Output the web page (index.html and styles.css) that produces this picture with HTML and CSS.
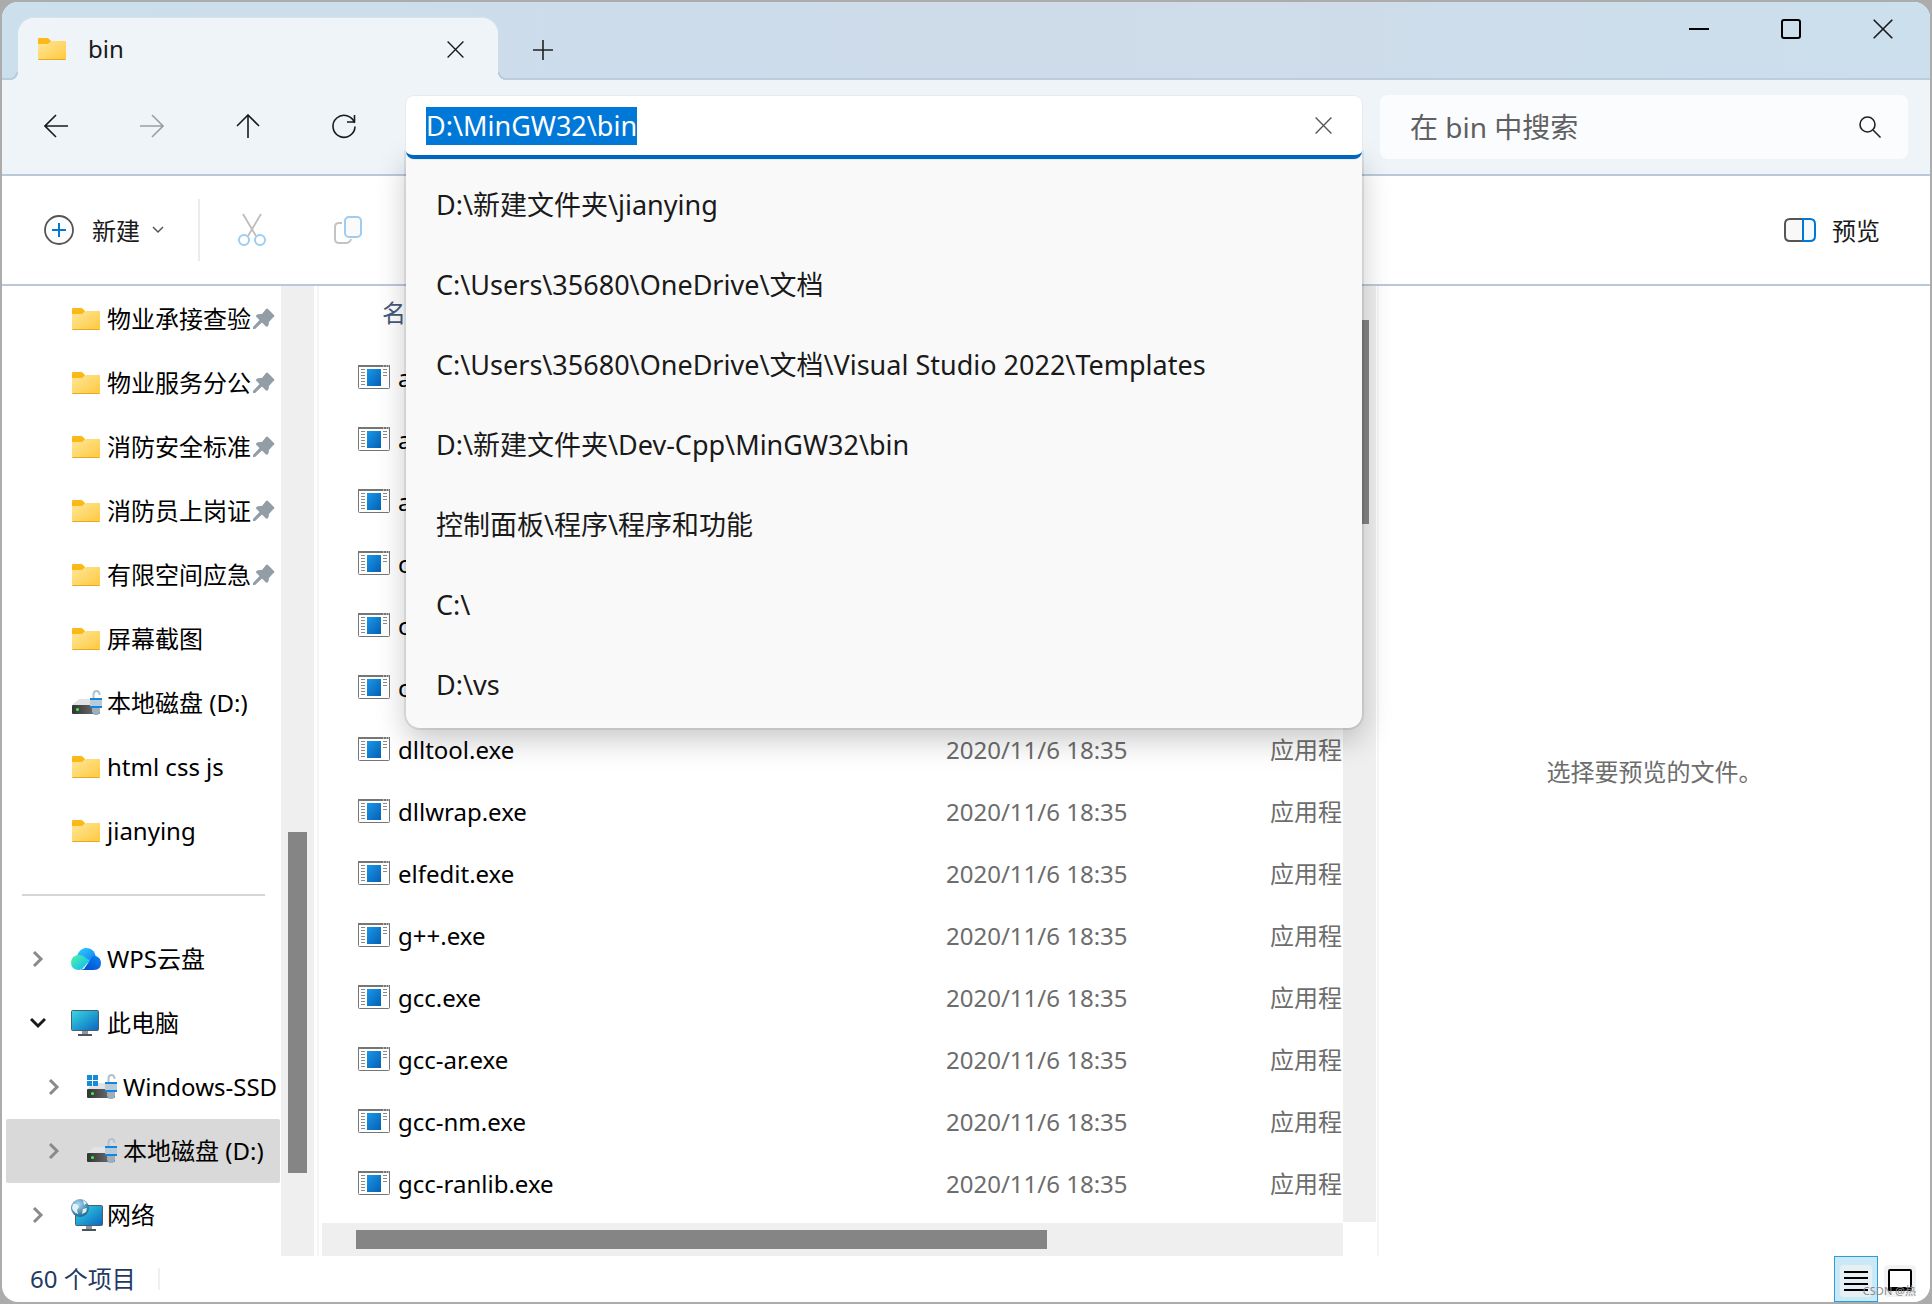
FILE: index.html
```html
<!DOCTYPE html>
<html lang="zh-CN">
<head>
<meta charset="utf-8">
<title>bin</title>
<link rel="stylesheet" href="styles.css">
</head>
<body>
<svg class="defs" width="0" height="0" aria-hidden="true">
  <defs>
    <linearGradient id="g-folder" x1="0" y1="0" x2="1" y2="1"><stop offset="0" stop-color="#ffe69c"/><stop offset="1" stop-color="#ffc93c"/></linearGradient>
    <linearGradient id="g-exe" x1="0" y1="0" x2="1" y2="1"><stop offset="0" stop-color="#1a97e6"/><stop offset="1" stop-color="#0560b6"/></linearGradient>
    <linearGradient id="g-screen" x1="0" y1="0" x2="1" y2="1"><stop offset="0" stop-color="#38d9e4"/><stop offset="1" stop-color="#0a66c0"/></linearGradient>
    <linearGradient id="g-disk" x1="0" y1="0" x2="1" y2="0"><stop offset="0" stop-color="#333"/><stop offset="1" stop-color="#777"/></linearGradient>
    <linearGradient id="g-cloud1" x1="0" y1="0" x2="1" y2="1"><stop offset="0" stop-color="#2cd0ff"/><stop offset="1" stop-color="#1478f0"/></linearGradient>
    <linearGradient id="g-cloud2" x1="0" y1="0" x2="1" y2="1"><stop offset="0" stop-color="#52f5a0"/><stop offset="1" stop-color="#06b4ff"/></linearGradient>
    <linearGradient id="g-cloud3" x1="1" y1="0" x2="0" y2="1"><stop offset="0" stop-color="#0a86f5"/><stop offset="1" stop-color="#0647c8"/></linearGradient>
    <radialGradient id="g-globe" cx="0.4" cy="0.3" r="0.7"><stop offset="0" stop-color="#a9dcf5"/><stop offset="1" stop-color="#23688f"/></radialGradient>
    <symbol id="folder" viewBox="0 0 28 22">
      <path d="M0 1.2Q0 0 1.200 0H9Q10 0 11 1L13 3V6H0Z" fill="#fbb917"/>
      <path d="M0 6H9Q10.500 6 11.500 4.500Q12.500 3 14 3H27Q28 3 28 4V21Q28 22 27 22H1Q0 22 0 21Z" fill="url(#g-folder)"/>
      <path d="M0.500 21.500H27.500" stroke="#e9a820"/>
    </symbol>
    <symbol id="exe" viewBox="0 0 32 24">
      <rect x="0.500" y="0.500" width="31" height="23" rx="1" fill="#fff" stroke="#767676"/>
      <path d="M0 1H32" stroke="#767676" stroke-width="2"/>
      <path d="M25 1h1M28 1h1M30 1h1" stroke="#eee"/>
      <rect x="9" y="4" width="14" height="17" fill="url(#g-exe)"/>
      <path d="M3 4.500h4M3 7.500h4M3 10.500h4M3 13.500h4M3 16.500h4M3 19.500h4M25 4.500h4M25 7.500h4M25 10.500h4" stroke="#8a8a8a"/>
    </symbol>
    <symbol id="drive" viewBox="0 0 32 26">
      <path d="M7 9H28V15H0Z" fill="#e1e3e6"/>
      <rect y="15" width="28" height="9" rx="1" fill="url(#g-disk)"/>
      <circle cx="5.500" cy="19.500" r="1.500" fill="#2dff43"/>
      <path d="M21.500 9V4.500Q21.500 1 24.500 1Q27.500 1 27.500 4.500V5" fill="none" stroke="#b5c2cd" stroke-width="2"/>
      <rect x="18" y="8" width="12" height="10" fill="#b9cad9"/>
      <path d="M18 9H30M18 17H30" stroke="#1585dc" stroke-width="2"/>
      <path d="M20 18H28V22L26 25H22L20 22Z" fill="#9dafbd"/>
    </symbol>
    <symbol id="drive-win" viewBox="0 0 32 26">
      <use href="#drive" width="32" height="26"/>
      <path d="M0 1h5v5h-5zM6 1h5v5H6zM0 7h5v5h-5zM6 7h5v5H6z" fill="#168ad6"/>
    </symbol>
    <symbol id="cloud" viewBox="0 0 30 22">
      <path d="M6 8C8 2 12 0 15 0C20 0 24 3 24.500 8L16 15Z" fill="url(#g-cloud1)"/>
      <path d="M13 21L21 9Q23 7 25 8Q30 10 30 15Q30 22 23 22H9Z" fill="url(#g-cloud3)"/>
      <path d="M8 22Q0 22 0 14Q1 7 8 7Q12 7 15 10Q17 12 19 12L13 19Q11 22 8 22Z" fill="url(#g-cloud2)"/>
    </symbol>
    <symbol id="monitor" viewBox="0 0 28 26">
      <path d="M11 21h6v3h-6z" fill="#8d979f"/><path d="M7 25h14" stroke="#4c555c" stroke-width="2"/>
      <rect x="0.500" y="0.500" width="27" height="20" rx="1" fill="url(#g-screen)" stroke="#49606c"/>
    </symbol>
    <symbol id="network" viewBox="0 0 32 32">
      <path d="M15 27h6v3h-6z" fill="#8d979f"/><path d="M11 31h14" stroke="#4c555c" stroke-width="2"/>
      <rect x="4.500" y="6.500" width="27" height="20" rx="1" fill="url(#g-screen)" stroke="#49606c"/>
      <circle cx="9" cy="9" r="9" fill="url(#g-globe)"/>
      <path d="M2 5Q6 4 8 8L6 11L7 15Q2 13 1 9ZM12 1L16 4L13 6ZM12 10L16 9L15 13L11 15Z" fill="#e3f2fa"/>
    </symbol>
    <symbol id="pin" viewBox="0 0 22 22">
      <path d="M13 1Q14 0 15 1L21 7Q22 9 20 9.500L16 14Q16 17 14.500 18.500Q13.500 19 12.500 18L9 14.500L2 21H0V19L6.500 12L3.500 9Q2.500 8 3.500 7Q5 5.500 9 6Z" fill="#929da5"/>
    </symbol>
    <symbol id="chev-r" viewBox="0 0 10 16"><path d="M1 1L8 8L1 15" fill="none" stroke="#8a8a8a" stroke-width="3"/></symbol>
    <symbol id="chev-d" viewBox="0 0 16 10"><path d="M1 1L8 8L15 1" fill="none" stroke="#1a1a1a" stroke-width="3"/></symbol>
    <symbol id="x" viewBox="0 0 20 20"><path d="M0.700 0.700L19.300 19.300M19.300 0.700L0.700 19.300" fill="none" stroke="currentColor" stroke-width="1.600"/></symbol>
    <symbol id="arrow-l" viewBox="0 0 24 24"><path d="M24 12H1M12 1L1 12L12 23" fill="none" stroke="currentColor" stroke-width="1.600"/></symbol>
    <symbol id="arrow-r" viewBox="0 0 24 24"><path d="M0 12H23M12 1L23 12L12 23" fill="none" stroke="currentColor" stroke-width="1.600"/></symbol>
    <symbol id="arrow-u" viewBox="0 0 24 24"><path d="M12 24V1M1 12L12 1L23 12" fill="none" stroke="currentColor" stroke-width="1.600"/></symbol>
  </defs>
</svg>

<div class="window">
  <header class="titlebar">
    <div class="tab">
      <svg class="ic-folder"><use href="#folder"/></svg>
      <span class="tab-title">bin</span>
      <button class="icon-btn" aria-label="关闭标签页"><svg class="ic-x-small"><use href="#x"/></svg></button>
    </div>
    <button class="icon-btn new-tab" aria-label="新标签页"><svg width="20" height="20"><path d="M10 0V20M0 10H20" stroke="#222" stroke-width="1.600"/></svg></button>
    <div class="win-controls">
      <button class="icon-btn" aria-label="最小化"><svg width="20" height="20"><path d="M0 10H20" stroke="#000" stroke-width="2"/></svg></button>
      <button class="icon-btn" aria-label="最大化"><svg width="20" height="20"><rect x="1" y="1" width="18" height="18" rx="2" fill="none" stroke="#000" stroke-width="2"/></svg></button>
      <button class="icon-btn" aria-label="关闭"><svg width="20" height="20"><use href="#x"/></svg></button>
    </div>
  </header>

  <nav class="navbar">
    <div class="nav-buttons">
      <button class="icon-btn" aria-label="后退"><svg width="24" height="24"><use href="#arrow-l"/></svg></button>
      <button class="icon-btn" aria-label="前进" disabled><svg width="24" height="24"><use href="#arrow-r"/></svg></button>
      <button class="icon-btn" aria-label="向上"><svg width="24" height="24"><use href="#arrow-u"/></svg></button>
      <button class="icon-btn" aria-label="刷新"><svg width="24" height="24"><path d="M22.500 9A11 11 0 1 0 23 12.500M22.500 1V8H15" fill="none" stroke="currentColor" stroke-width="1.600"/></svg></button>
    </div>
    <div class="address">
      <div class="address-box">
        <input class="address-input" id="address" type="text" aria-label="地址" value="D:\MinGW32\bin" spellcheck="false" autocomplete="off" autofocus>
        <button class="icon-btn clear" aria-label="清除"><svg class="ic-x-small"><use href="#x"/></svg></button>
      </div>
      <ul class="suggestions">
        <li>D:\新建文件夹\jianying</li>
        <li>C:\Users\35680\OneDrive\文档</li>
        <li>C:\Users\35680\OneDrive\文档\Visual Studio 2022\Templates</li>
        <li>D:\新建文件夹\Dev-Cpp\MinGW32\bin</li>
        <li>控制面板\程序\程序和功能</li>
        <li>C:\</li>
        <li>D:\vs</li>
      </ul>
    </div>
    <div class="search">
      <input class="search-input" type="text" aria-label="搜索" placeholder="在 bin 中搜索">
      <svg width="22" height="22"><circle cx="8.500" cy="8.500" r="7.500" fill="none" stroke="#222" stroke-width="1.600"/><path d="M14 14L21.500 21.500" stroke="#222" stroke-width="1.600"/></svg>
    </div>
  </nav>

  <div class="toolbar">
    <button class="tool-btn new-btn">
      <svg width="30" height="30"><circle cx="15" cy="15" r="14" fill="#fdfdfd" stroke="#555" stroke-width="1.800"/><path d="M15 8V22M8 15H22" stroke="#0078d4" stroke-width="2"/></svg>
      <span>新建</span>
      <svg class="caret" width="12" height="8"><path d="M1 1L6 6L11 1" fill="none" stroke="#555" stroke-width="1.500"/></svg>
    </button>
    <button class="tool-btn cut-btn" aria-label="剪切" disabled>
      <svg width="28" height="32"><path d="M5 0L18 22M23 0L10 22" stroke="#bdbdbd" stroke-width="1.800"/><circle cx="6" cy="26" r="5" fill="#fff" stroke="#9dcdf0" stroke-width="2"/><circle cx="22" cy="26" r="5" fill="#fff" stroke="#9dcdf0" stroke-width="2"/></svg>
    </button>
    <button class="tool-btn" aria-label="复制" disabled>
      <svg width="28" height="28"><path d="M8 7H5Q1 7 1 11V23Q1 27 5 27H12Q16 27 17 23" fill="none" stroke="#c4c4c4" stroke-width="2"/><rect x="11" y="1" width="16" height="20" rx="4" fill="#fafafa" stroke="#9dcdf0" stroke-width="2"/></svg>
    </button>
    <button class="tool-btn preview-btn">
      <svg width="32" height="24"><path d="M19 1H6Q1 1 1 6V18Q1 23 6 23H19" fill="#f8f8f8" stroke="#555" stroke-width="2"/><path d="M19 1H26Q31 1 31 6V18Q31 23 26 23H19Z" fill="#f5fafe" stroke="#0078d4" stroke-width="2"/></svg>
      <span>预览</span>
    </button>
  </div>

  <main class="content">
    <aside class="sidebar">
      <ul class="tree">
        <li><svg class="ic-folder"><use href="#folder"/></svg><span class="pinned">物业承接查验</span><svg class="ic-pin"><use href="#pin"/></svg></li>
        <li><svg class="ic-folder"><use href="#folder"/></svg><span class="pinned">物业服务分公</span><svg class="ic-pin"><use href="#pin"/></svg></li>
        <li><svg class="ic-folder"><use href="#folder"/></svg><span class="pinned">消防安全标准</span><svg class="ic-pin"><use href="#pin"/></svg></li>
        <li><svg class="ic-folder"><use href="#folder"/></svg><span class="pinned">消防员上岗证</span><svg class="ic-pin"><use href="#pin"/></svg></li>
        <li><svg class="ic-folder"><use href="#folder"/></svg><span class="pinned">有限空间应急</span><svg class="ic-pin"><use href="#pin"/></svg></li>
        <li><svg class="ic-folder"><use href="#folder"/></svg><span>屏幕截图</span></li>
        <li><svg class="ic-drive"><use href="#drive"/></svg><span>本地磁盘 (D:)</span></li>
        <li><svg class="ic-folder"><use href="#folder"/></svg><span>html css js</span></li>
        <li><svg class="ic-folder"><use href="#folder"/></svg><span>jianying</span></li>
        <li class="separator" role="separator"></li>
        <li class="expandable"><svg class="chev"><use href="#chev-r"/></svg><svg class="ic-cloud"><use href="#cloud"/></svg><span>WPS云盘</span></li>
        <li class="expandable"><svg class="chev"><use href="#chev-d"/></svg><svg class="ic-monitor"><use href="#monitor"/></svg><span>此电脑</span></li>
        <li class="expandable child"><svg class="chev"><use href="#chev-r"/></svg><svg class="ic-drive"><use href="#drive-win"/></svg><span>Windows-SSD</span></li>
        <li class="expandable child selected"><svg class="chev"><use href="#chev-r"/></svg><svg class="ic-drive"><use href="#drive"/></svg><span>本地磁盘 (D:)</span></li>
        <li class="expandable"><svg class="chev"><use href="#chev-r"/></svg><svg class="ic-network"><use href="#network"/></svg><span>网络</span></li>
      </ul>
      <div class="vbar side-vbar"><div class="thumb"></div></div>
    </aside>

    <section class="files">
      <div class="list">
        <table class="file-table">
          <colgroup><col class="c-name"><col class="c-date"><col class="c-type"></colgroup>
          <thead><tr><th>名称</th><th>修改日期</th><th>类型</th></tr></thead>
          <tbody>
            <tr><td><svg class="ic-exe"><use href="#exe"/></svg>addr2line.exe</td><td>2020/11/6 18:35</td><td>应用程</td></tr>
            <tr><td><svg class="ic-exe"><use href="#exe"/></svg>ar.exe</td><td>2020/11/6 18:35</td><td>应用程</td></tr>
            <tr><td><svg class="ic-exe"><use href="#exe"/></svg>as.exe</td><td>2020/11/6 18:35</td><td>应用程</td></tr>
            <tr><td><svg class="ic-exe"><use href="#exe"/></svg>c++.exe</td><td>2020/11/6 18:35</td><td>应用程</td></tr>
            <tr><td><svg class="ic-exe"><use href="#exe"/></svg>c++filt.exe</td><td>2020/11/6 18:35</td><td>应用程</td></tr>
            <tr><td><svg class="ic-exe"><use href="#exe"/></svg>cpp.exe</td><td>2020/11/6 18:35</td><td>应用程</td></tr>
            <tr><td><svg class="ic-exe"><use href="#exe"/></svg>dlltool.exe</td><td>2020/11/6 18:35</td><td>应用程</td></tr>
            <tr><td><svg class="ic-exe"><use href="#exe"/></svg>dllwrap.exe</td><td>2020/11/6 18:35</td><td>应用程</td></tr>
            <tr><td><svg class="ic-exe"><use href="#exe"/></svg>elfedit.exe</td><td>2020/11/6 18:35</td><td>应用程</td></tr>
            <tr><td><svg class="ic-exe"><use href="#exe"/></svg>g++.exe</td><td>2020/11/6 18:35</td><td>应用程</td></tr>
            <tr><td><svg class="ic-exe"><use href="#exe"/></svg>gcc.exe</td><td>2020/11/6 18:35</td><td>应用程</td></tr>
            <tr><td><svg class="ic-exe"><use href="#exe"/></svg>gcc-ar.exe</td><td>2020/11/6 18:35</td><td>应用程</td></tr>
            <tr><td><svg class="ic-exe"><use href="#exe"/></svg>gcc-nm.exe</td><td>2020/11/6 18:35</td><td>应用程</td></tr>
            <tr><td><svg class="ic-exe"><use href="#exe"/></svg>gcc-ranlib.exe</td><td>2020/11/6 18:35</td><td>应用程</td></tr>
          </tbody>
        </table>
      </div>
      <div class="vbar list-vbar"><div class="thumb"></div></div>
      <div class="hbar"><div class="thumb"></div></div>
    </section>

    <section class="preview"><p>选择要预览的文件。</p></section>
  </main>

  <footer class="status">
    <span class="count">60 个项目</span>
    <div class="views">
      <button class="view-btn active" aria-label="详细信息"><svg width="32" height="32"><rect width="32" height="32" rx="4" fill="#e6eff4"/><path d="M4 7H28M4 13H28M4 19H28M4 25H28" stroke="#000" stroke-width="2"/></svg></button>
      <button class="view-btn" aria-label="大图标"><svg width="32" height="32"><rect width="32" height="32" rx="4" fill="#f3f3f3"/><rect x="5" y="5" width="22" height="18" rx="1" fill="#fff" stroke="#000" stroke-width="2"/><path d="M4 24H28" stroke="#000" stroke-width="4"/></svg></button>
      <span class="watermark">CSDN @热</span>
    </div>
  </footer>
</div>
<script src="main.js"></script>
</body>
</html>
```
FILE: main.js
```js
const address = document.getElementById('address');
address.focus();
address.select();
```
FILE: styles.css
```css
* { box-sizing: border-box; }

body {
  margin: 0;
  height: 100vh;
  padding: 2px;
  background: #acacac;
  color: #000;
  font: 24px/32px "Noto Sans", "Noto Sans CJK SC", sans-serif;
}

ul { list-style: none; margin: 0; padding: 0; }
svg { display: block; flex: none; overflow: visible; }
button {
  border: 0;
  padding: 0;
  background: none;
  color: #1a1a1a;
  font: inherit;
  display: flex;
  align-items: center;
  justify-content: center;
}
.defs { position: absolute; }

.window {
  height: 100%;
  display: flex;
  flex-direction: column;
  border-radius: 16px;
  overflow: hidden;
  background: #fff;
}

/* icons */
.ic-folder { width: 28px; height: 22px; }
.ic-exe { width: 32px; height: 24px; }
.ic-drive { width: 32px; height: 26px; }
.ic-cloud { width: 30px; height: 22px; }
.ic-monitor { width: 28px; height: 26px; }
.ic-network { width: 32px; height: 32px; }
.ic-pin { width: 22px; height: 22px; }
.ic-x-small { width: 17px; height: 17px; }
.icon-btn { width: 40px; height: 40px; }
.icon-btn:disabled { color: #9a9fa3; }

/* title bar */
.titlebar {
  height: 78px;
  flex: none;
  display: flex;
  align-items: flex-end;
  padding-left: 16px;
  background: linear-gradient(90deg, #cbdfec, #cddcea 35%, #cfdcea 65%, #cbdfec);
  box-shadow: inset 0 -2px #bccddd;
}
.tab {
  position: relative;
  width: 480px;
  height: 62px;
  display: flex;
  align-items: center;
  padding: 0 23px 0 20px;
  border-radius: 16px 16px 0 0;
  background: #eff4f9;
  box-shadow: 0 -1px 1px #dde3e8;
}
.tab::before, .tab::after {
  content: "";
  position: absolute;
  bottom: 0;
  width: 8px;
  height: 8px;
}
.tab::before { left: -8px; background: radial-gradient(circle at 0 0, transparent 6px, #bccddd 6px 8px, #eff4f9 8px); }
.tab::after { right: -8px; background: radial-gradient(circle at 100% 0, transparent 6px, #bccddd 6px 8px, #eff4f9 8px); }
.tab-title { flex: 1; padding-left: 22px; color: #1a1a1a; }
.new-tab { margin: 0 0 10px 25px; }
.win-controls {
  align-self: flex-start;
  display: flex;
  gap: 52px;
  margin: 7px 27px 0 auto;
}

/* navigation bar */
.navbar {
  height: 96px;
  flex: none;
  display: flex;
  align-items: flex-start;
  padding: 15px 22px 0 34px;
  background: #eff4f9;
  border-bottom: 2px solid #bac9da;
}
.nav-buttons {
  display: flex;
  gap: 56px;
  width: 370px;
  flex: none;
  padding-top: 11px;
}
.address {
  position: relative;
  z-index: 2;
  flex: 956 1 956px;
  margin-top: 1px;
}
.address-box {
  height: 63px;
  display: flex;
  align-items: center;
  padding: 0 19px 0 20px;
  border-radius: 8px;
  background: #fff;
  border-bottom: 4px solid #0067c0;
  box-shadow: 0 0 0 1px #e6eaee;
  position: relative;
  z-index: 1;
}
.address-input, .search-input {
  flex: 1;
  min-width: 0;
  border: 0;
  outline: 0;
  padding: 0;
  background: none;
  font: 27px/38px "Noto Sans", "Noto Sans CJK SC", sans-serif;
}
.search-input { font-size: 28px; }
.address-input::selection { background: #0078d7; color: #fff; }
.clear { color: #555; }
.suggestions {
  position: absolute;
  top: 56px;
  left: 0;
  right: 0;
  padding: 13px 0 3px;
  border-radius: 0 0 14px 14px;
  background: #f9f9f9;
  box-shadow: 0 0 0 2px rgba(0, 0, 0, .08), 0 12px 30px rgba(0, 0, 0, .22);
}
.suggestions li {
  height: 80px;
  padding-left: 30px;
  color: #1a1a1a;
  font-size: 27px;
  line-height: 80px;
  white-space: nowrap;
}
.search {
  flex: 528 1 528px;
  height: 64px;
  margin-left: 18px;
  display: flex;
  align-items: center;
  padding: 0 27px 0 30px;
  border-radius: 8px;
  background: #fbfcfe;
}
.search-input::placeholder { color: #5f6062; opacity: 1; }

/* toolbar */
.toolbar {
  height: 110px;
  flex: none;
  display: flex;
  align-items: center;
  padding: 0 50px 0 42px;
  border-bottom: 2px solid #bac9da;
}
.tool-btn span { padding-top: 2px; }
.new-btn { padding-right: 34px; height: 62px; border-right: 2px solid #ebebeb; }
.new-btn span { margin: 0 12px 0 18px; }
.cut-btn { margin: 0 68px 0 38px; }
.preview-btn { margin-left: auto; gap: 16px; }

/* content area */
.content {
  flex: 1;
  min-height: 0;
  display: flex;
}
.sidebar {
  width: 317px;
  flex: none;
  display: flex;
  border-right: 2px solid #f5f5f5;
}
.tree { width: 278px; margin-right: 1px; padding-top: 1px; overflow: hidden; }
.tree li {
  height: 64px;
  display: flex;
  align-items: center;
  padding-left: 70px;
  white-space: nowrap;
}
.tree li > svg:not(.chev):not(.ic-pin) { margin-right: auto; }
.tree li > span { width: 173px; flex: none; }
.tree li > .pinned { width: 144px; margin-right: 2px; }
.tree .ic-pin { margin-right: 5px; }
.tree .expandable { padding-left: 28px; }
.tree .expandable.child { padding-left: 44px; }
.tree li.child > span { width: 157px; }
.chev { width: 16px; height: 16px; margin-right: 25px; }
.tree .separator { padding: 0 15px 0 20px; }
.separator::before { content: ""; flex: 1; height: 2px; background: #d6d6d6; }
.tree .selected { margin-left: 4px; border-radius: 2px; background: #d9d9d9; }
.tree .expandable.selected { padding-left: 40px; }

.vbar { width: 33px; padding: 0 7px; background: #efefef; }
.thumb { background: #858585; }
.side-vbar .thumb { height: 341px; margin-top: 546px; }

.files {
  flex: 1060 1 1060px;
  min-width: 0;
  display: grid;
  grid-template: minmax(0, 1fr) 33px / minmax(0, 1fr) 33px;
  row-gap: 1px;
  padding: 0 1px 0 3px;
  border-right: 2px solid #f5f5f5;
}
.list { overflow: hidden; padding-left: 36px; }
.list-vbar .thumb { height: 204px; margin-top: 34px; }
.hbar { padding: 7px 0 7px 34px; background: #efefef; }
.hbar .thumb { width: 70%; height: 19px; }
.file-table {
  width: 1100px;
  table-layout: fixed;
  border-collapse: collapse;
  text-align: left;
}
.c-name { width: 588px; }
.c-date { width: 324px; }
.file-table th {
  height: 61px;
  padding: 0 0 8px 24px;
  color: #44597a;
  font-weight: 400;
}
.file-table td { height: 62px; padding: 0; color: #6d6d6d; }
.file-table td:first-child { color: #000; }
.ic-exe { display: inline-block; vertical-align: -2px; margin-right: 8px; }

.preview {
  flex: 551 1 551px;
  display: flex;
  align-items: center;
  justify-content: center;
  padding-top: 2px;
  color: #6d6d6d;
}
.preview p { margin: 0; }

/* status bar */
.status {
  height: 46px;
  flex: none;
  display: flex;
  align-items: center;
  justify-content: space-between;
  padding-left: 28px;
  color: #1f3a63;
}
.count { padding-right: 22px; line-height: 22px; border-right: 2px solid #f0f0f0; }
.views { position: relative; display: flex; padding-right: 8px; }
.view-btn { width: 44px; height: 46px; padding-top: 4px; }
.view-btn.active { background: #cbe8f6; border: 1px solid #26a0da; }
.watermark {
  position: absolute;
  right: 14px;
  bottom: 3px;
  color: #888;
  font-size: 11px;
  line-height: 16px;
}
```
